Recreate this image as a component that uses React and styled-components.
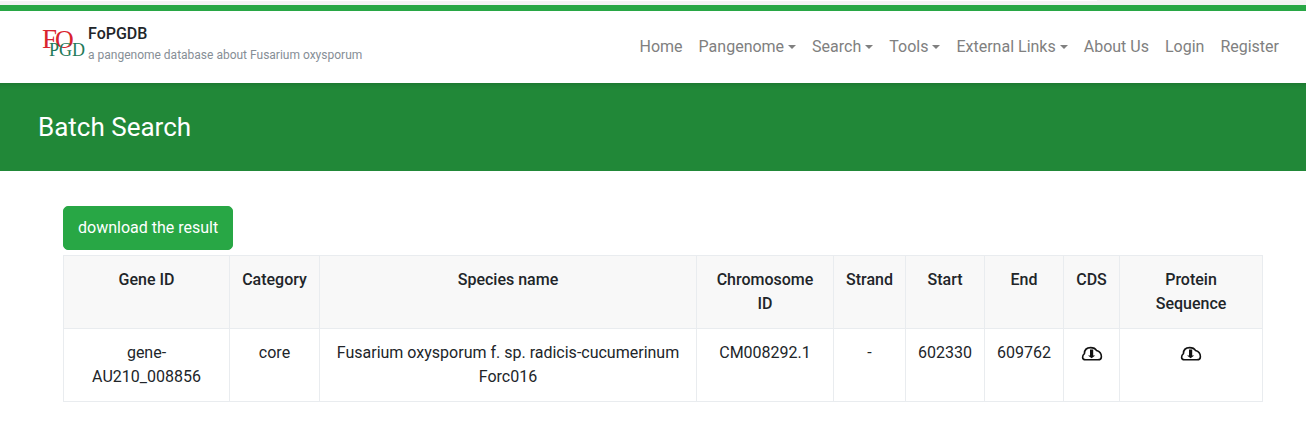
import React from 'react';
import styled, { createGlobalStyle } from 'styled-components';

const GlobalStyle = createGlobalStyle`
  *, *::before, *::after { box-sizing: border-box; }
  body {
    margin: 0;
    background: #fff;
    color: #212529;
    font: 400 16px/24px Roboto, "Liberation Sans", sans-serif;
  }
`;

const TopStrip = styled.div`
  height: 5px;
  background: linear-gradient(to right, #fff 84%, #f5f5f5 84%) 0 0 / 100% 1px no-repeat, #f3f3f3;
`;

const Header = styled.header`
  display: flex;
  align-items: center;
  justify-content: space-between;
  min-height: 78px;
  padding: 0 19px 0 38px;
  border-top: 6px solid #28a745;
  background: #fff;
`;

const Brand = styled.a`
  display: flex;
  align-items: center;
  color: #212529;
  text-decoration: none;
`;

const Logo = styled.svg`
  width: 50px;
  height: 50px;
  flex: none;
`;

const BrandText = styled.span`
  display: flex;
  flex-direction: column;
  padding-bottom: 8px;
`;

const BrandName = styled.span`
  font-weight: 500;
  line-height: 24px;
`;

const Tagline = styled.span`
  color: #868e96;
  font-size: 12px;
  line-height: 18px;
`;

const Nav = styled.nav`
  display: flex;
`;

const NavLink = styled.a`
  display: flex;
  align-items: center;
  padding: 8px;
  color: #808080;
  text-decoration: none;
  white-space: nowrap;
`;

const Caret = styled.span`
  margin-left: 4px;
  border: 4px solid transparent;
  border-top-color: currentColor;
  border-bottom: 0;
`;

const Banner = styled.section`
  padding: 28px 38px;
  background: #218838;
  box-shadow: inset 0 6px 4px -4px rgba(0, 0, 0, 0.12);
`;

const Title = styled.h1`
  margin: 0;
  color: #fff;
  font-size: 26px;
  font-weight: 400;
  line-height: 32px;
`;

const Content = styled.main`
  padding: 35px 43px 24px 63px;
`;

const DownloadButton = styled.button`
  display: block;
  margin: 0 0 5px;
  padding: 9px 14px;
  border: 1px solid #28a745;
  border-radius: 5px;
  background: #28a745;
  color: #fff;
  font: inherit;
  cursor: pointer;
`;

const Table = styled.table`
  width: 100%;
  table-layout: fixed;
  border-collapse: collapse;
  text-align: center;
`;

const Col = styled.col`
  width: ${({ $share }) => $share}px;
`;

const HeadCell = styled.th`
  padding: 12px;
  border: 1px solid #e9ecef;
  background: #f8f8f8;
  font-weight: 500;
  vertical-align: top;
`;

const Cell = styled.td`
  padding: 12px;
  border: 1px solid #e9ecef;
  vertical-align: top;
`;

const FileLink = styled.a`
  display: flex;
  align-items: center;
  justify-content: center;
  height: 24px;
  color: #111;
`;

const CloudSvg = styled.svg`
  width: 22px;
  height: 16px;
`;

const links = [
  { label: 'Home' },
  { label: 'Pangenome', menu: true },
  { label: 'Search', menu: true },
  { label: 'Tools', menu: true },
  { label: 'External Links', menu: true },
  { label: 'About Us' },
  { label: 'Login' },
  { label: 'Register' },
];

const columns = [
  { label: 'Gene ID', share: 166 },
  { label: 'Category', share: 90 },
  { label: 'Species name', share: 377 },
  { label: 'Chromosome ID', share: 137 },
  { label: 'Strand', share: 72 },
  { label: 'Start', share: 79 },
  { label: 'End', share: 79 },
  { label: 'CDS', share: 56 },
  { label: 'Protein Sequence', share: 143 },
];

const genes = [
  [
    'gene-AU210_008856',
    'core',
    'Fusarium oxysporum f. sp. radicis-cucumerinum Forc016',
    'CM008292.1',
    '-',
    '602330',
    '609762',
  ],
];

function CloudDownload({ label }) {
  return (
    <FileLink href="#" aria-label={label}>
      <CloudSvg viewBox="0 0 22 16" fill="none" stroke="currentColor" aria-hidden="true">
        <path
          d="M4.6 14.8C2.5 14.8 1.6 13.7 1.6 12.2C1.6 10.6 2.3 9.6 3.4 8.7C3.4 4.8 6 2.6 9.6 2.6C12.2 2.6 14.4 3.4 15.6 5.6C18.4 6.4 20.4 8.8 20.4 11.7C20.4 13.8 19 14.8 17 14.8Z"
          strokeWidth="1.6"
          strokeLinejoin="round"
        />
        <path d="M9 4.6H12.2V10.4H14.2L10.6 13.2L7 10.4H9Z" fill="currentColor" stroke="none" />
      </CloudSvg>
    </FileLink>
  );
}

export default function App() {
  return (
    <>
      <GlobalStyle />
      <TopStrip />
      <Header>
        <Brand href="#">
          <Logo viewBox="0 0 50 50" fontFamily="Liberation Serif, serif" aria-hidden="true">
            <text x="4" y="26" fontSize="27" fill="#d9232e">F</text>
            <text x="17" y="26" fontSize="26" fill="#d9232e">O</text>
            <text x="11" y="34" fontSize="18" fill="#1f7a5a">PGD</text>
          </Logo>
          <BrandText>
            <BrandName>FoPGDB</BrandName>
            <Tagline>a pangenome database about Fusarium oxysporum</Tagline>
          </BrandText>
        </Brand>
        <Nav>
          {links.map(({ label, menu }) => (
            <NavLink key={label} href="#">
              {label}
              {menu && <Caret />}
            </NavLink>
          ))}
        </Nav>
      </Header>
      <Banner>
        <Title>Batch Search</Title>
      </Banner>
      <Content>
        <DownloadButton type="button">download the result</DownloadButton>
        <Table>
          <colgroup>
            {columns.map(({ label, share }) => (
              <Col key={label} $share={share} />
            ))}
          </colgroup>
          <thead>
            <tr>
              {columns.map(({ label }) => (
                <HeadCell key={label} scope="col">{label}</HeadCell>
              ))}
            </tr>
          </thead>
          <tbody>
            {genes.map((gene) => (
              <tr key={gene[0]}>
                {gene.map((value, i) => (
                  <Cell key={columns[i].label}>{value}</Cell>
                ))}
                <Cell><CloudDownload label="Download CDS" /></Cell>
                <Cell><CloudDownload label="Download protein sequence" /></Cell>
              </tr>
            ))}
          </tbody>
        </Table>
      </Content>
    </>
  );
}
